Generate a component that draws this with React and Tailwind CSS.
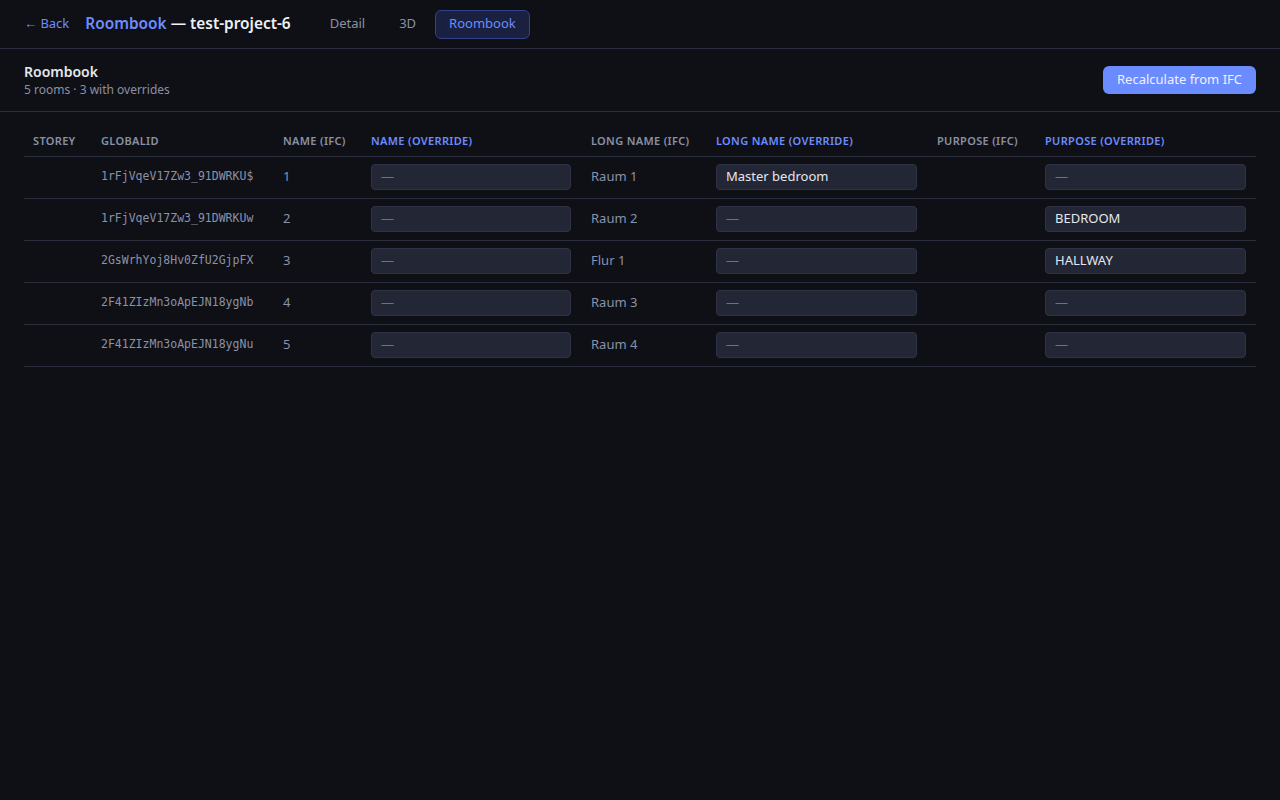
import React from "react";

const rows = [
  { gid: "1rFjVqeV17Zw3_91DWRKU$", name: "1", longIfc: "Raum 1", nameO: "", longO: "Master bedroom", purO: "" },
  { gid: "1rFjVqeV17Zw3_91DWRKUw", name: "2", longIfc: "Raum 2", nameO: "", longO: "", purO: "BEDROOM" },
  { gid: "2GsWrhYoj8Hv0ZfU2GjpFX", name: "3", longIfc: "Flur 1", nameO: "", longO: "", purO: "HALLWAY" },
  { gid: "2F41ZIzMn3oApEJN18ygNb", name: "4", longIfc: "Raum 3", nameO: "", longO: "", purO: "" },
  { gid: "2F41ZIzMn3oApEJN18ygNu", name: "5", longIfc: "Raum 4", nameO: "", longO: "", purO: "" },
];

function Field({ value }) {
  return (
    <div className="h-[26px] w-full rounded-[4px] border border-[#2f3345] bg-[#232634] px-[9px] flex items-center text-[13px]">
      {value ? (
        <span className="text-[#e5e7ee]">{value}</span>
      ) : (
        <span className="text-[#6b7186]">—</span>
      )}
    </div>
  );
}

export default function App() {
  const font = { fontFamily: '"Noto Sans", "Open Sans", sans-serif' };
  return (
    <div className="min-h-[800px] w-full bg-[#0f1016] text-[#e5e7ee]" style={font}>
      <header className="h-[49px] border-b border-[#2a2d3c] flex items-center pl-[24px]">
        <span className="text-[13px] text-[#6b8cff] mr-[16px]">← Back</span>
        <span className="text-[15.4px] font-semibold text-[#6b8cff]">Roombook</span>
        <span className="text-[15.4px] font-semibold text-[#eef0f5] ml-[4px]">— test-project-6</span>
        <nav className="flex items-center ml-[24px] gap-[4px] text-[13px]">
          <span className="px-[15px] py-[6px] text-[#8a90a3]">Detail</span>
          <span className="px-[15px] py-[6px] text-[#8a90a3]">3D</span>
          <span className="h-[29px] px-[13px] flex items-center rounded-[6px] border border-[#33428a] bg-[#1a2040] text-[#6b8cff]">Roombook</span>
        </nav>
      </header>

      <section className="h-[63px] border-b border-[#2a2d3c] px-[24px] flex items-center justify-between">
        <div className="flex flex-col leading-tight">
          <span className="text-[14px] font-semibold text-[#e5e7ee]">Roombook</span>
          <span className="text-[12px] text-[#8a90a3] mt-[1px]">5 rooms · 3 with overrides</span>
        </div>
        <button className="h-[28px] px-[14px] rounded-[6px] bg-[#6b8cff] text-[13px] text-[#eef1ff]">
          Recalculate from IFC
        </button>
      </section>

      <div className="px-[24px] pt-[14px]">
        <table className="w-full table-fixed border-collapse">
          <colgroup>
            <col className="w-[68px]" />
            <col className="w-[181px]" />
            <col className="w-[88px]" />
            <col className="w-[220px]" />
            <col className="w-[125px]" />
            <col className="w-[221px]" />
            <col className="w-[108px]" />
            <col className="w-[221px]" />
          </colgroup>
          <thead>
            <tr className="h-[30px] border-b border-[#2a2d3c] text-left text-[11px] font-semibold tracking-[0.03em]">
              <th className="px-[9px] font-semibold text-[#8a90a3]">STOREY</th>
              <th className="px-[9px] font-semibold text-[#8a90a3]">GLOBALID</th>
              <th className="px-[10px] font-semibold text-[#8a90a3]">NAME (IFC)</th>
              <th className="px-[10px] font-semibold text-[#6b8cff]">NAME (OVERRIDE)</th>
              <th className="px-[10px] font-semibold text-[#8a90a3]">LONG NAME (IFC)</th>
              <th className="px-[10px] font-semibold text-[#6b8cff]">LONG NAME (OVERRIDE)</th>
              <th className="px-[10px] font-semibold text-[#8a90a3]">PURPOSE (IFC)</th>
              <th className="px-[10px] font-semibold text-[#6b8cff]">PURPOSE (OVERRIDE)</th>
            </tr>
          </thead>
          <tbody>
            {rows.map((r) => (
              <tr key={r.gid} className="h-[42px] border-b border-[#2a2d3c] text-[13px]">
                <td className="px-[9px]"></td>
                <td className="px-[9px] text-[11.5px] text-[#8a92aa]" style={{ fontFamily: '"DejaVu Sans Mono", "Liberation Mono", monospace' }}>
                  {r.gid}
                </td>
                <td className="px-[10px] text-[#8a92aa]">{r.name}</td>
                <td className="px-[10px]"><Field value={r.nameO} /></td>
                <td className="px-[10px] text-[#8a92aa]">{r.longIfc}</td>
                <td className="px-[10px]"><Field value={r.longO} /></td>
                <td className="px-[10px]"></td>
                <td className="px-[10px]"><Field value={r.purO} /></td>
              </tr>
            ))}
          </tbody>
        </table>
      </div>
    </div>
  );
}
